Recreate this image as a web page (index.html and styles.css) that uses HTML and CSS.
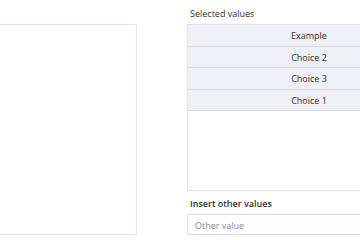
FILE: index.html
```html
<!DOCTYPE html>
<html lang="en">

<head>
  <meta charset="UTF-8">
  <meta name="viewport" content="width=device-width, initial-scale=1.0">
  <title>Selected values</title>
  <link rel="stylesheet" href="styles.css">
</head>

<body>
<div class="viewport">
  <div class="page">
    <div class="source-box"></div>

    <div class="picker">
      <div class="picker-label">Selected values</div>
      <div class="selected-list">
        <div class="selected-row">Example</div>
        <div class="selected-row">Choice 2</div>
        <div class="selected-row">Choice 3</div>
        <div class="selected-row">Choice 1</div>
      </div>

      <div class="picker-label picker-label-bold">Insert other values</div>
      <input type="text" class="other-input" placeholder="Other value">
    </div>
  </div>
</div>
</body>

</html>
```

FILE: styles.css
```css
body {
  font-family: "Open Sans", "Noto Sans", sans-serif;
  margin: 0;
  padding: 0;
  background-color: #ffffff;
  color: #333333;
}

:root {
  --color-border: #e1e1f0;
  --color-row: #eef0f5;
  --color-row-line: #d9dbe3;
}

/* clip the columns that run past the window */
.viewport {
  width: 360px;
  height: 240px;
  overflow: hidden;
}

.page {
  display: flex;
  gap: 50px;
  margin-left: -107px;
  padding-top: 8px;
}

.source-box {
  flex-shrink: 0;
  width: 244px;
  margin-top: 16px;
  border: 1px solid var(--color-border);
  box-sizing: border-box;
  background-color: white;
}

.picker {
  flex-shrink: 0;
  width: 244px;
}

.picker-label {
  font-size: 9px;
  line-height: 12px;
  margin: 0 0 4px 3px;
}

.picker-label-bold {
  font-weight: 600;
  margin-top: 7px;
}

.selected-list {
  height: 167px;
  border: 1px solid var(--color-border);
  box-sizing: border-box;
}

.selected-row {
  height: 20.5px;
  line-height: 22px;
  background-color: var(--color-row);
  border-bottom: 1px solid var(--color-row-line);
  text-align: center;
  font-size: 9px;
  overflow: hidden;
}

.other-input {
  display: block;
  width: 100%;
  height: 21px;
  box-sizing: border-box;
  border: 1px solid #dcdcef;
  border-radius: 2px;
  padding: 1px 7px 0;
  font-family: inherit;
  font-size: 9px;
  color: #333333;
  outline: none;
}

.other-input::placeholder {
  color: #8a8a8a;
}
```
